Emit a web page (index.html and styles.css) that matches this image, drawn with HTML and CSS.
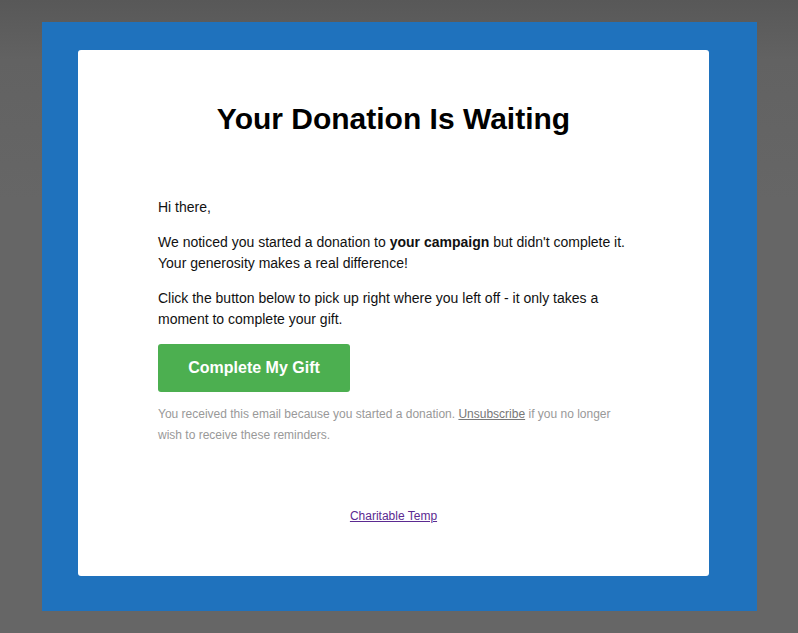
FILE: index.html
```html
<!DOCTYPE html>
<html lang="en">
<head>
  <meta charset="UTF-8">
  <meta name="viewport" content="width=device-width, initial-scale=1.0">
  <title>Your Donation Is Waiting</title>
  <link rel="stylesheet" href="styles.css">
</head>
<body>
  <div class="backdrop">
    <div class="frame">
      <div class="card">
        <h1 class="title">Your Donation Is Waiting</h1>

        <div class="content">
          <p>Hi there,</p>
          <p>We noticed you started a donation to <strong>your campaign</strong> but didn't complete it. Your generosity makes a real difference!</p>
          <p>Click the button below to pick up right where you left off - it only takes a moment to complete your gift.</p>

          <a class="gift-btn" href="#">Complete My Gift</a>

          <p class="fine-print">You received this email because you started a donation. <a href="#">Unsubscribe</a> if you no longer wish to receive these reminders.</p>
        </div>

        <div class="footer">
          <a href="#">Charitable Temp</a>
        </div>
      </div>
    </div>
  </div>
</body>
</html>
```

FILE: styles.css
```css
* {
  margin: 0;
  padding: 0;
  box-sizing: border-box;
}

body {
  font-family: "Liberation Sans", Arial, Helvetica, sans-serif;
  background-color: #656565;
  min-height: 100vh;
}

.backdrop {
  padding: 22px 41px 23px 42px;
  background: linear-gradient(to bottom, #585858 0, #626262 60px, #666666 200px);
  min-height: 633px;
}

/* Blue frame around the email */
.frame {
  background-color: #1f72bd;
  padding: 28px 48px 35px 36px;
}

.card {
  background-color: #fff;
  border-radius: 3px;
  padding: 51px 80px 51px 80px;
  color: #111;
}

.title {
  font-size: 30px;
  line-height: 36px;
  font-weight: bold;
  text-align: center;
  color: #000;
  margin-bottom: 60px;
}

.content p {
  font-size: 14px;
  line-height: 21px;
  margin-bottom: 14px;
}

.gift-btn {
  display: inline-block;
  width: 192px;
  height: 48px;
  line-height: 48px;
  text-align: center;
  background-color: #4caf50;
  color: #fff;
  font-size: 16px;
  font-weight: bold;
  text-decoration: none;
  border-radius: 3px;
  margin-bottom: 12px;
}

.content .fine-print {
  font-size: 12px;
  line-height: 21px;
  color: #999;
  margin-bottom: 0;
}

.fine-print a {
  color: #777;
}

.footer {
  text-align: center;
  margin-top: 61px;
  font-size: 12px;
  line-height: 18px;
}

.footer a {
  color: #5b2a91;
}
```
